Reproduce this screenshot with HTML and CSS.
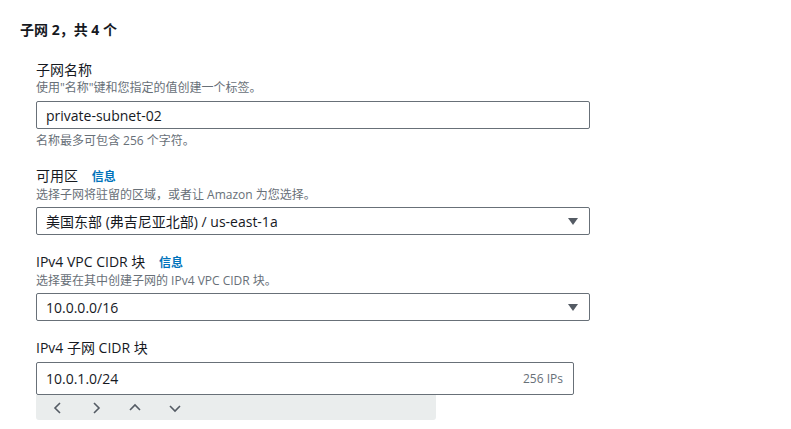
FILE: index.html
```html
<!DOCTYPE html>
<html lang="zh-CN">
<head>
  <meta charset="UTF-8">
  <meta name="viewport" content="width=device-width, initial-scale=1.0">
  <title>子网设置</title>
  <link rel="stylesheet" href="styles.css">
</head>
<body>
  <div class="subnet">
    <h3 class="subnet-title">子网 2，共 4 个</h3>

    <div class="fields">
      <div class="field">
        <div class="field-label">子网名称</div>
        <div class="field-desc">使用"名称"键和您指定的值创建一个标签。</div>
        <input class="text-input" type="text" value="private-subnet-02">
        <div class="field-hint">名称最多可包含 256 个字符。</div>
      </div>

      <div class="field">
        <div class="field-label">可用区 <a class="info" href="#">信息</a></div>
        <div class="field-desc">选择子网将驻留的区域，或者让 Amazon 为您选择。</div>
        <div class="select">
          <span>美国东部 (弗吉尼亚北部) / us-east-1a</span>
          <span class="caret"></span>
        </div>
      </div>

      <div class="field">
        <div class="field-label">IPv4 VPC CIDR 块 <a class="info" href="#">信息</a></div>
        <div class="field-desc">选择要在其中创建子网的 IPv4 VPC CIDR 块。</div>
        <div class="select">
          <span>10.0.0.0/16</span>
          <span class="caret"></span>
        </div>
      </div>

      <div class="field">
        <div class="field-label">IPv4 子网 CIDR 块</div>
        <div class="cidr-input">
          <span>10.0.1.0/24</span>
          <span class="cidr-count">256 IPs</span>
        </div>
        <div class="cidr-tools">
          <button class="tool" aria-label="左移">
            <svg width="10" height="12" viewBox="0 0 10 12"><path d="M7 1 L2 6 L7 11" fill="none" stroke="#545b64" stroke-width="1.6"/></svg>
          </button>
          <button class="tool" aria-label="右移">
            <svg width="10" height="12" viewBox="0 0 10 12"><path d="M3 1 L8 6 L3 11" fill="none" stroke="#545b64" stroke-width="1.6"/></svg>
          </button>
          <button class="tool wide" aria-label="增加">
            <svg width="12" height="10" viewBox="0 0 12 10"><path d="M1 7 L6 2 L11 7" fill="none" stroke="#545b64" stroke-width="1.6"/></svg>
          </button>
          <button class="tool wide" aria-label="减少">
            <svg width="12" height="10" viewBox="0 0 12 10"><path d="M1 3 L6 8 L11 3" fill="none" stroke="#545b64" stroke-width="1.6"/></svg>
          </button>
        </div>
      </div>
    </div>
  </div>
</body>
</html>
```

FILE: styles.css
```css
body {
  margin: 0;
  padding: 20px 20px 0;
  font-family: "Open Sans", "Noto Sans CJK SC", sans-serif;
  color: #16191f;
  background-color: #fff;
}

.subnet-title {
  margin: 0;
  font-size: 14px;
  font-weight: 700;
  line-height: 20px;
}

.fields {
  padding-left: 16px;
  margin-top: 20px;
}

.field {
  width: 554px;
  margin-bottom: 17px;
}

.field:last-child {
  margin-bottom: 0;
}

.field-label {
  font-size: 14px;
  line-height: 20px;
}

.info {
  margin-left: 10px;
  font-size: 12px;
  font-weight: 700;
  color: #0073bb;
  text-decoration: none;
}

.field-desc,
.field-hint {
  font-size: 12px;
  line-height: 16px;
  color: #687078;
}

.field-hint {
  margin-top: 4px;
}

.text-input,
.select,
.cidr-input {
  box-sizing: border-box;
  width: 100%;
  height: 28px;
  margin-top: 5px;
  padding: 0 9px;
  border: 1px solid #687078;
  border-radius: 2px;
  font-family: inherit;
  font-size: 14px;
  color: #16191f;
  background-color: #fff;
}

.text-input {
  display: block;
  outline: none;
}

.select {
  display: flex;
  align-items: center;
  justify-content: space-between;
  margin-top: 4px;
  padding-right: 11px;
}

/* 下拉三角 */
.caret {
  width: 0;
  height: 0;
  border-left: 5px solid transparent;
  border-right: 5px solid transparent;
  border-top: 7px solid #545b64;
}

.cidr-input {
  display: flex;
  align-items: center;
  justify-content: space-between;
  width: 538px;
  height: 33px;
  margin-top: 4px;
  padding-right: 10px;
}

.cidr-count {
  font-size: 12px;
  color: #687078;
}

.cidr-tools {
  display: flex;
  align-items: center;
  gap: 18px;
  width: 400px;
  height: 25px;
  padding-left: 12px;
  box-sizing: border-box;
  background-color: #eaeded;
  border-radius: 0 0 3px 3px;
}

.tool {
  display: flex;
  align-items: center;
  justify-content: center;
  width: 20px;
  height: 20px;
  padding: 0;
  border: none;
  background: none;
  cursor: pointer;
}

.tool.wide {
  width: 22px;
}
```
